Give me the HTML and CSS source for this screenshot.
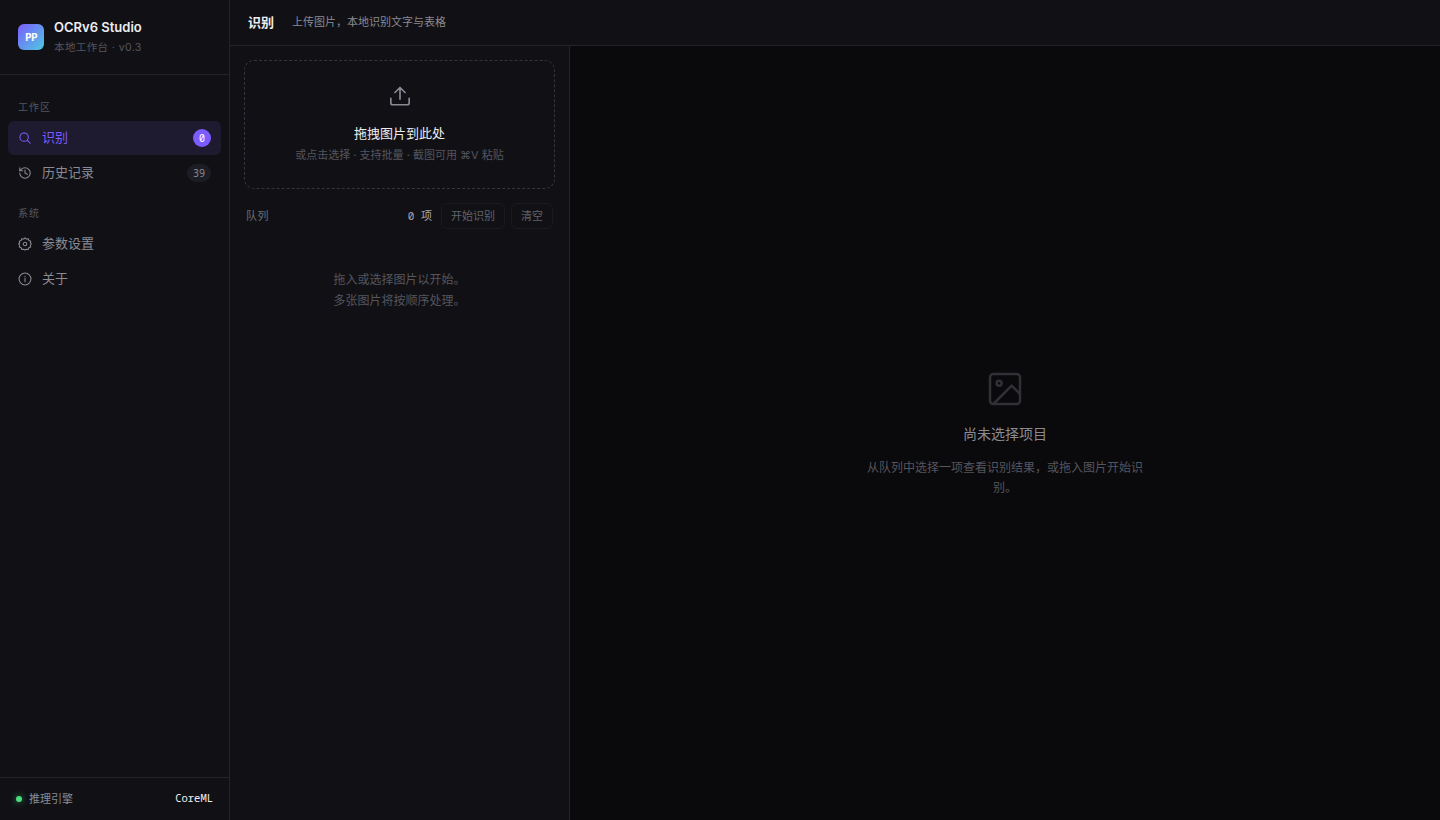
FILE: index.html
```
<!DOCTYPE html>
<html lang="zh-CN">
<head>
  <meta charset="UTF-8" />
  <meta name="viewport" content="width=device-width, initial-scale=1" />
  <title>OCRv6 Studio</title>
  <link rel="stylesheet" href="styles.css">
</head>
<body>
  <div class="app">
    <aside class="sidebar">
      <div class="brand">
        <div class="brand-mark">PP</div>
        <div class="brand-text">
          <div class="brand-name">OCRv6 Studio</div>
          <div class="brand-sub">本地工作台 · v0.3</div>
        </div>
      </div>
      <nav class="nav">
        <div class="nav-label">工作区</div>
        <a class="nav-item active">
          <svg viewBox="0 0 16 16"><circle cx="7" cy="7" r="4.8"/><path d="M10.7 10.7L14 14"/></svg>
          <span>识别</span>
          <span class="badge">0</span>
        </a>
        <a class="nav-item">
          <svg viewBox="0 0 24 24" class="s24"><path d="M3 12a9 9 0 1 0 9-9 9.75 9.75 0 0 0-6.74 2.74L3 8"/><path d="M3 3v5h5"/><path d="M12 7v5l4 2"/></svg>
          <span>历史记录</span>
          <span class="badge">39</span>
        </a>
        <div class="nav-label">系统</div>
        <a class="nav-item">
          <svg viewBox="0 0 16 16"><circle cx="8" cy="8" r="2"/><path d="M8 .9l1.6 1.5 2.1-.4.8 2 2.1.8-.4 2.1L15.300 8l-1.200 1.400.4 2.100-2.100.800-.8 2-2.100-.4L8 15.100l-1.500-1.200-2.100.4-.8-2-2.100-.8.4-2.100L.7 8l1.200-1.100-.4-2.100 2.100-.8.8-2 2.100.4z"/></svg>
          <span>参数设置</span>
        </a>
        <a class="nav-item">
          <svg viewBox="0 0 16 16"><circle cx="8" cy="8" r="6.8"/><path d="M8 7.300v3.700M8 5v.4"/></svg>
          <span>关于</span>
        </a>
      </nav>
      <div class="engine">
        <span class="dot"></span>
        <span>推理引擎</span>
        <span class="engine-name">CoreML</span>
      </div>
    </aside>

    <main class="main">
      <header class="topbar">
        <h1>识别</h1>
        <span class="topbar-sub">上传图片，本地识别文字与表格</span>
      </header>
      <div class="content">
        <section class="queue">
          <div class="dropzone">
            <svg viewBox="0 0 24 24"><path d="M12 15.500V3M6.500 8.200L12 2.700l5.500 5.500M2 14.500v5a2 2 0 0 0 2 2h16a2 2 0 0 0 2-2v-5"/></svg>
            <div class="drop-title">拖拽图片到此处</div>
            <div class="drop-hint">或点击选择 · 支持批量 · 截图可用 ⌘V 粘贴</div>
          </div>
          <div class="queue-head">
            <span class="queue-title">队列</span>
            <span class="queue-count">0 项</span>
            <button class="btn" disabled>开始识别</button>
            <button class="btn" disabled>清空</button>
          </div>
          <div class="queue-empty">拖入或选择图片以开始。<br>多张图片将按顺序处理。</div>
        </section>
        <section class="viewer">
          <svg viewBox="0 0 24 24"><rect x="3" y="3" width="18" height="18" rx="2"/><circle cx="8.500" cy="8.500" r="1.500"/><path d="M21 15l-5-5L5 21"/></svg>
          <div class="viewer-title">尚未选择项目</div>
          <p>从队列中选择一项查看识别结果，或拖入图片开始识别。</p>
        </section>
      </div>
    </main>
  </div>
</body>
</html>
```
FILE: styles.css
```
:root {
  --bg: #0a0a0c;
  --panel: #111115;
  --line: #232329;
  --text: #ededf0;
  --muted: #8a8a94;
  --dim: #55555f;
  --accent: #7c5cff;
  --mono: "Noto Sans Mono", "DejaVu Sans Mono", "Noto Sans CJK SC", monospace;
}
* {
  box-sizing: border-box;
}
body {
  margin: 0;
  background: var(--bg);
  color: var(--text);
  font-family: Inter, "Noto Sans CJK SC", sans-serif;
  font-size: 13px;
  line-height: 1.5;
  -webkit-font-smoothing: antialiased;
}
svg {
  fill: none;
  stroke: currentColor;
  stroke-linecap: round;
  stroke-linejoin: round;
}
.app {
  display: grid;
  grid-template-columns: 230px 1fr;
  height: 100vh;
}
.sidebar {
  display: flex;
  flex-direction: column;
  background: var(--panel);
  border-right: 1px solid var(--line);
}
.brand {
  display: flex;
  align-items: center;
  gap: 10px;
  height: 75px;
  padding: 0 18px;
  border-bottom: 1px solid var(--line);
}
.brand-mark {
  width: 26px;
  height: 26px;
  border-radius: 6px;
  background: linear-gradient(135deg, #7c5cff, #4ec9e0);
  color: #fff;
  font: 700 11px/26px var(--mono);
  letter-spacing: -0.5px;
  text-align: center;
}
.brand-name {
  font-weight: 600;
  line-height: 20px;
}
.brand-sub {
  margin-top: 2px;
  color: var(--dim);
  font-size: 10.5px;
  line-height: 18px;
  letter-spacing: 0.4px;
}
.nav {
  flex: 1;
  padding: 10px 8px;
}
.nav-label {
  padding: 14px 10px 6px;
  color: var(--dim);
  font-size: 10px;
  line-height: 16px;
  letter-spacing: 1px;
}
.nav-item {
  display: flex;
  align-items: center;
  gap: 10px;
  height: 34px;
  margin-bottom: 1px;
  padding: 0 10px;
  border-radius: 6px;
  color: var(--muted);
}
.nav-item svg {
  width: 14px;
  height: 14px;
  stroke-width: 1.2;
}
.nav-item .s24 {
  stroke-width: 1.8;
}
.nav-item.active {
  background: #1e1a30;
  color: var(--accent);
}
.badge {
  min-width: 18px;
  margin-left: auto;
  padding: 0 6px;
  border-radius: 9px;
  background: #1c1c24;
  font: 10px/18px var(--mono);
  text-align: center;
}
.active .badge {
  background: var(--accent);
  color: #fff;
}
.engine {
  display: flex;
  align-items: center;
  gap: 7px;
  height: 43px;
  padding: 0 16px;
  border-top: 1px solid var(--line);
  color: var(--muted);
  font-size: 11px;
}
.dot {
  width: 6px;
  height: 6px;
  border-radius: 50%;
  background: #4ade80;
  box-shadow: 0 0 6px rgba(74, 222, 128, 0.6);
}
.engine-name {
  margin-left: auto;
  color: var(--text);
  font-family: var(--mono);
  font-size: 10.5px;
}
.main {
  display: flex;
  flex-direction: column;
}
.topbar {
  display: flex;
  align-items: center;
  gap: 18px;
  height: 46px;
  padding: 0 18px;
  background: var(--panel);
  border-bottom: 1px solid var(--line);
}
.topbar h1 {
  margin: 0;
  font-size: 13px;
  font-weight: 600;
}
.topbar-sub {
  color: var(--muted);
  font-size: 11px;
}
.content {
  display: grid;
  flex: 1;
  grid-template-columns: 340px 1fr;
}
.queue {
  padding: 14px;
  background: var(--panel);
  border-right: 1px solid var(--line);
}
.dropzone {
  height: 129px;
  padding-top: 24px;
  border: 1px dashed #34343c;
  border-radius: 10px;
  text-align: center;
}
.dropzone svg {
  display: block;
  width: 22px;
  height: 22px;
  margin: 0 auto 16px;
  color: var(--muted);
  stroke-width: 1.8;
}
.drop-title {
  line-height: 20px;
}
.drop-hint {
  margin-top: 4px;
  color: var(--dim);
  font-size: 11px;
  line-height: 17px;
}
.queue-head {
  display: flex;
  align-items: center;
  gap: 6px;
  margin: 14px 2px 0;
}
.queue-title {
  flex: 1;
  color: var(--muted);
  font-size: 11px;
  letter-spacing: 0.5px;
  opacity: 0.75;
}
.queue-count {
  margin-right: 3px;
  color: #a6a6b0;
  font: 11px/16px var(--mono);
}
.btn {
  height: 26px;
  padding: 0 9px;
  border: 1px solid #1a1a1f;
  border-radius: 6px;
  background: none;
  color: #626269;
  font: inherit;
  font-size: 11px;
}
.queue-empty {
  margin-top: 40px;
  color: var(--dim);
  font-size: 12px;
  line-height: 21px;
  text-align: center;
}
.viewer {
  display: flex;
  flex-direction: column;
  align-items: center;
  justify-content: center;
  text-align: center;
}
.viewer svg {
  width: 40px;
  height: 40px;
  color: #303036;
  stroke-width: 1.5;
}
.viewer-title {
  margin-top: 14px;
  color: var(--muted);
  font-size: 14px;
  line-height: 21px;
}
.viewer p {
  width: 280px;
  margin: 14px 0 0;
  color: var(--dim);
  font-size: 12px;
  line-height: 20px;
}
```
